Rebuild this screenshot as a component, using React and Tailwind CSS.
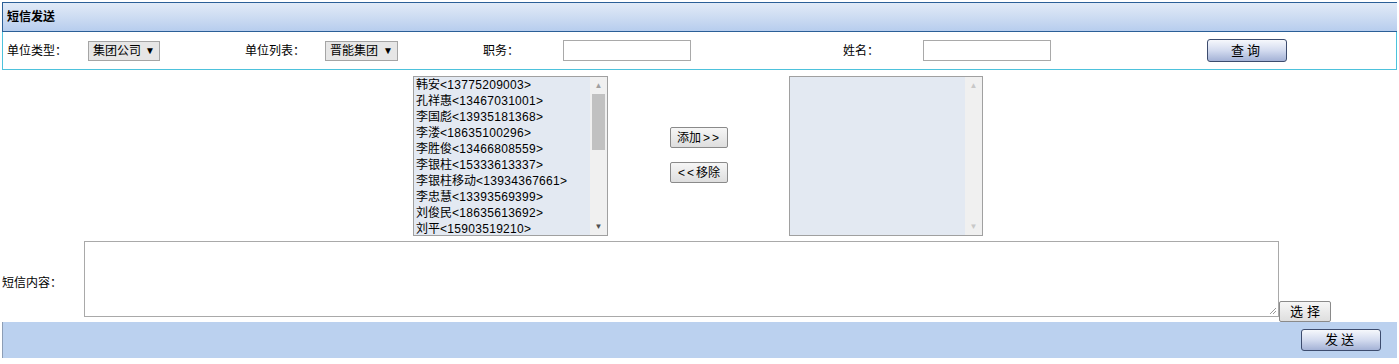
import React from "react";

const font = { fontFamily: '"Liberation Sans", "Noto Sans CJK SC", sans-serif' };

const people = [
  ["韩安", "13775209003"],
  ["孔祥惠", "13467031001"],
  ["李国彪", "13935181368"],
  ["李溇", "18635100296"],
  ["李胜俊", "13466808559"],
  ["李银柱", "15333613337"],
  ["李银柱移动", "13934367661"],
  ["李忠慧", "13393569399"],
  ["刘俊民", "18635613692"],
  ["刘平", "15903519210"],
];

function FakeSelect({ text, w }) {
  return (
    <div
      className={`h-[20px] ${w} flex items-center justify-between border border-[#a5a5a5] bg-[#e6e6e6] pl-[4px] pr-[4px] text-[12px] text-black`}
    >
      <span>{text}</span>
      <span className="text-[10px] leading-none">▼</span>
    </div>
  );
}

function BlueButton({ children, w, h }) {
  return (
    <div
      className={`${w} ${h} flex items-center justify-center rounded-[3px] border border-[#3d4c6e] bg-gradient-to-b from-[#f6f8fc] via-[#d3dbef] to-[#a4b2d6] text-[13px] text-black tracking-[3px]`}
    >
      {children}
    </div>
  );
}

function GrayButton({ children, w, h }) {
  return (
    <div
      className={`${w} ${h} flex items-center justify-center rounded-[2px] border border-[#8a8a8a] bg-gradient-to-b from-[#f6f6f6] to-[#dedede] text-[12px] text-black`}
    >
      {children}
    </div>
  );
}

function Scrollbar({ thumb, dim }) {
  return (
    <div className="w-[17px] h-full bg-[#f0f0f0] flex flex-col items-center">
      <div className={`h-[17px] flex items-center justify-center text-[8px] ${dim ? "text-[#c8c8c8]" : "text-[#a0a0a0]"}`}>▲</div>
      <div className="flex-1 w-full px-[2px]">
        {thumb && <div className="w-full h-[56px] bg-[#c1c1c1]" />}
      </div>
      <div className={`h-[17px] flex items-center justify-center text-[8px] ${dim ? "text-[#c8c8c8]" : "text-[#505050]"}`}>▼</div>
    </div>
  );
}

export default function App() {
  return (
    <div className="w-[1399px] h-[364px] bg-white text-black" style={font}>
      <div className="ml-[2px] w-[1395px] pt-[2px]">
        {/* Header */}
        <div className="h-[30px] border-t border-l border-b border-[#2b5f97] bg-gradient-to-b from-[#e1eaf7] via-[#cddcf2] to-[#b7cdee] flex items-center pl-[4px]">
          <span className="text-[12px] font-bold text-black">短信发送</span>
        </div>

        {/* Search row */}
        <div className="h-[38px] border-l border-r border-b border-[#4dc2dc] flex items-center pl-[4px] text-[12px]">
          <span className="w-[81px]">单位类型：</span>
          <div className="w-[157px]"><FakeSelect text="集团公司" w="w-[72px]" /></div>
          <span className="w-[80px]">单位列表：</span>
          <div className="w-[158px]"><FakeSelect text="晋能集团" w="w-[73px]" /></div>
          <span className="w-[80px]">职务：</span>
          <div className="w-[280px]"><div className="w-[128px] h-[21px] border border-[#a9a9a9] bg-white" /></div>
          <span className="w-[80px]">姓名：</span>
          <div className="w-[284px]"><div className="w-[128px] h-[21px] border border-[#a9a9a9] bg-white" /></div>
          <BlueButton w="w-[80px]" h="h-[23px]">查询</BlueButton>
        </div>
      </div>

      {/* Lists */}
      <div className="flex pt-[6px] pb-[5px]">
        <div className="ml-[413px] w-[195px] h-[160px] border border-[#a0a0a0] bg-[#e3e9f2] flex overflow-hidden">
          <div className="flex-1 pl-[2px] text-[12px] leading-[16px] overflow-hidden">
            {people.map(([n, p]) => (
              <div key={p} className="whitespace-nowrap">
                {n}
                <span className="tracking-[0.3px]">&lt;{p}&gt;</span>
              </div>
            ))}
          </div>
          <Scrollbar thumb />
        </div>
        <div className="ml-[62px] pt-[51px] flex flex-col gap-[14px]">
          <GrayButton w="w-[58px]" h="h-[21px]">添加<span className="tracking-[2px] pl-[2px]">&gt;&gt;</span></GrayButton>
          <GrayButton w="w-[58px]" h="h-[21px]"><span className="tracking-[2px]">&lt;&lt;</span>移除</GrayButton>
        </div>
        <div className="ml-[61px] w-[194px] h-[160px] border border-[#a0a0a0] bg-[#e3e9f2] flex justify-end">
          <Scrollbar dim />
        </div>
      </div>

      {/* Content row */}
      <div className="flex h-[81px]">
        <span className="w-[84px] pl-[2px] text-[12px] self-center pt-[2px]">短信内容：</span>
        <div className="relative w-[1195px] h-[76px] border border-[#a9a9a9] bg-white">
          <svg className="absolute right-[1px] bottom-[1px]" width="9" height="9" viewBox="0 0 9 9">
            <path d="M8 2 L2 8 M8 5 L5 8" stroke="#9a9a9a" strokeWidth="1" />
          </svg>
        </div>
        <div className="self-end">
          <GrayButton w="w-[52px]" h="h-[21px]"><span className="tracking-[4px] pl-[4px] text-[13px]">选择</span></GrayButton>
        </div>
      </div>

      {/* Bottom bar */}
      <div className="ml-[2px] w-[1395px] h-[36px] border-l border-[#8c9db5] bg-[#bbd1ef] flex items-center justify-end pr-[16px]">
        <BlueButton w="w-[80px]" h="h-[22px]">发送</BlueButton>
      </div>
    </div>
  );
}
